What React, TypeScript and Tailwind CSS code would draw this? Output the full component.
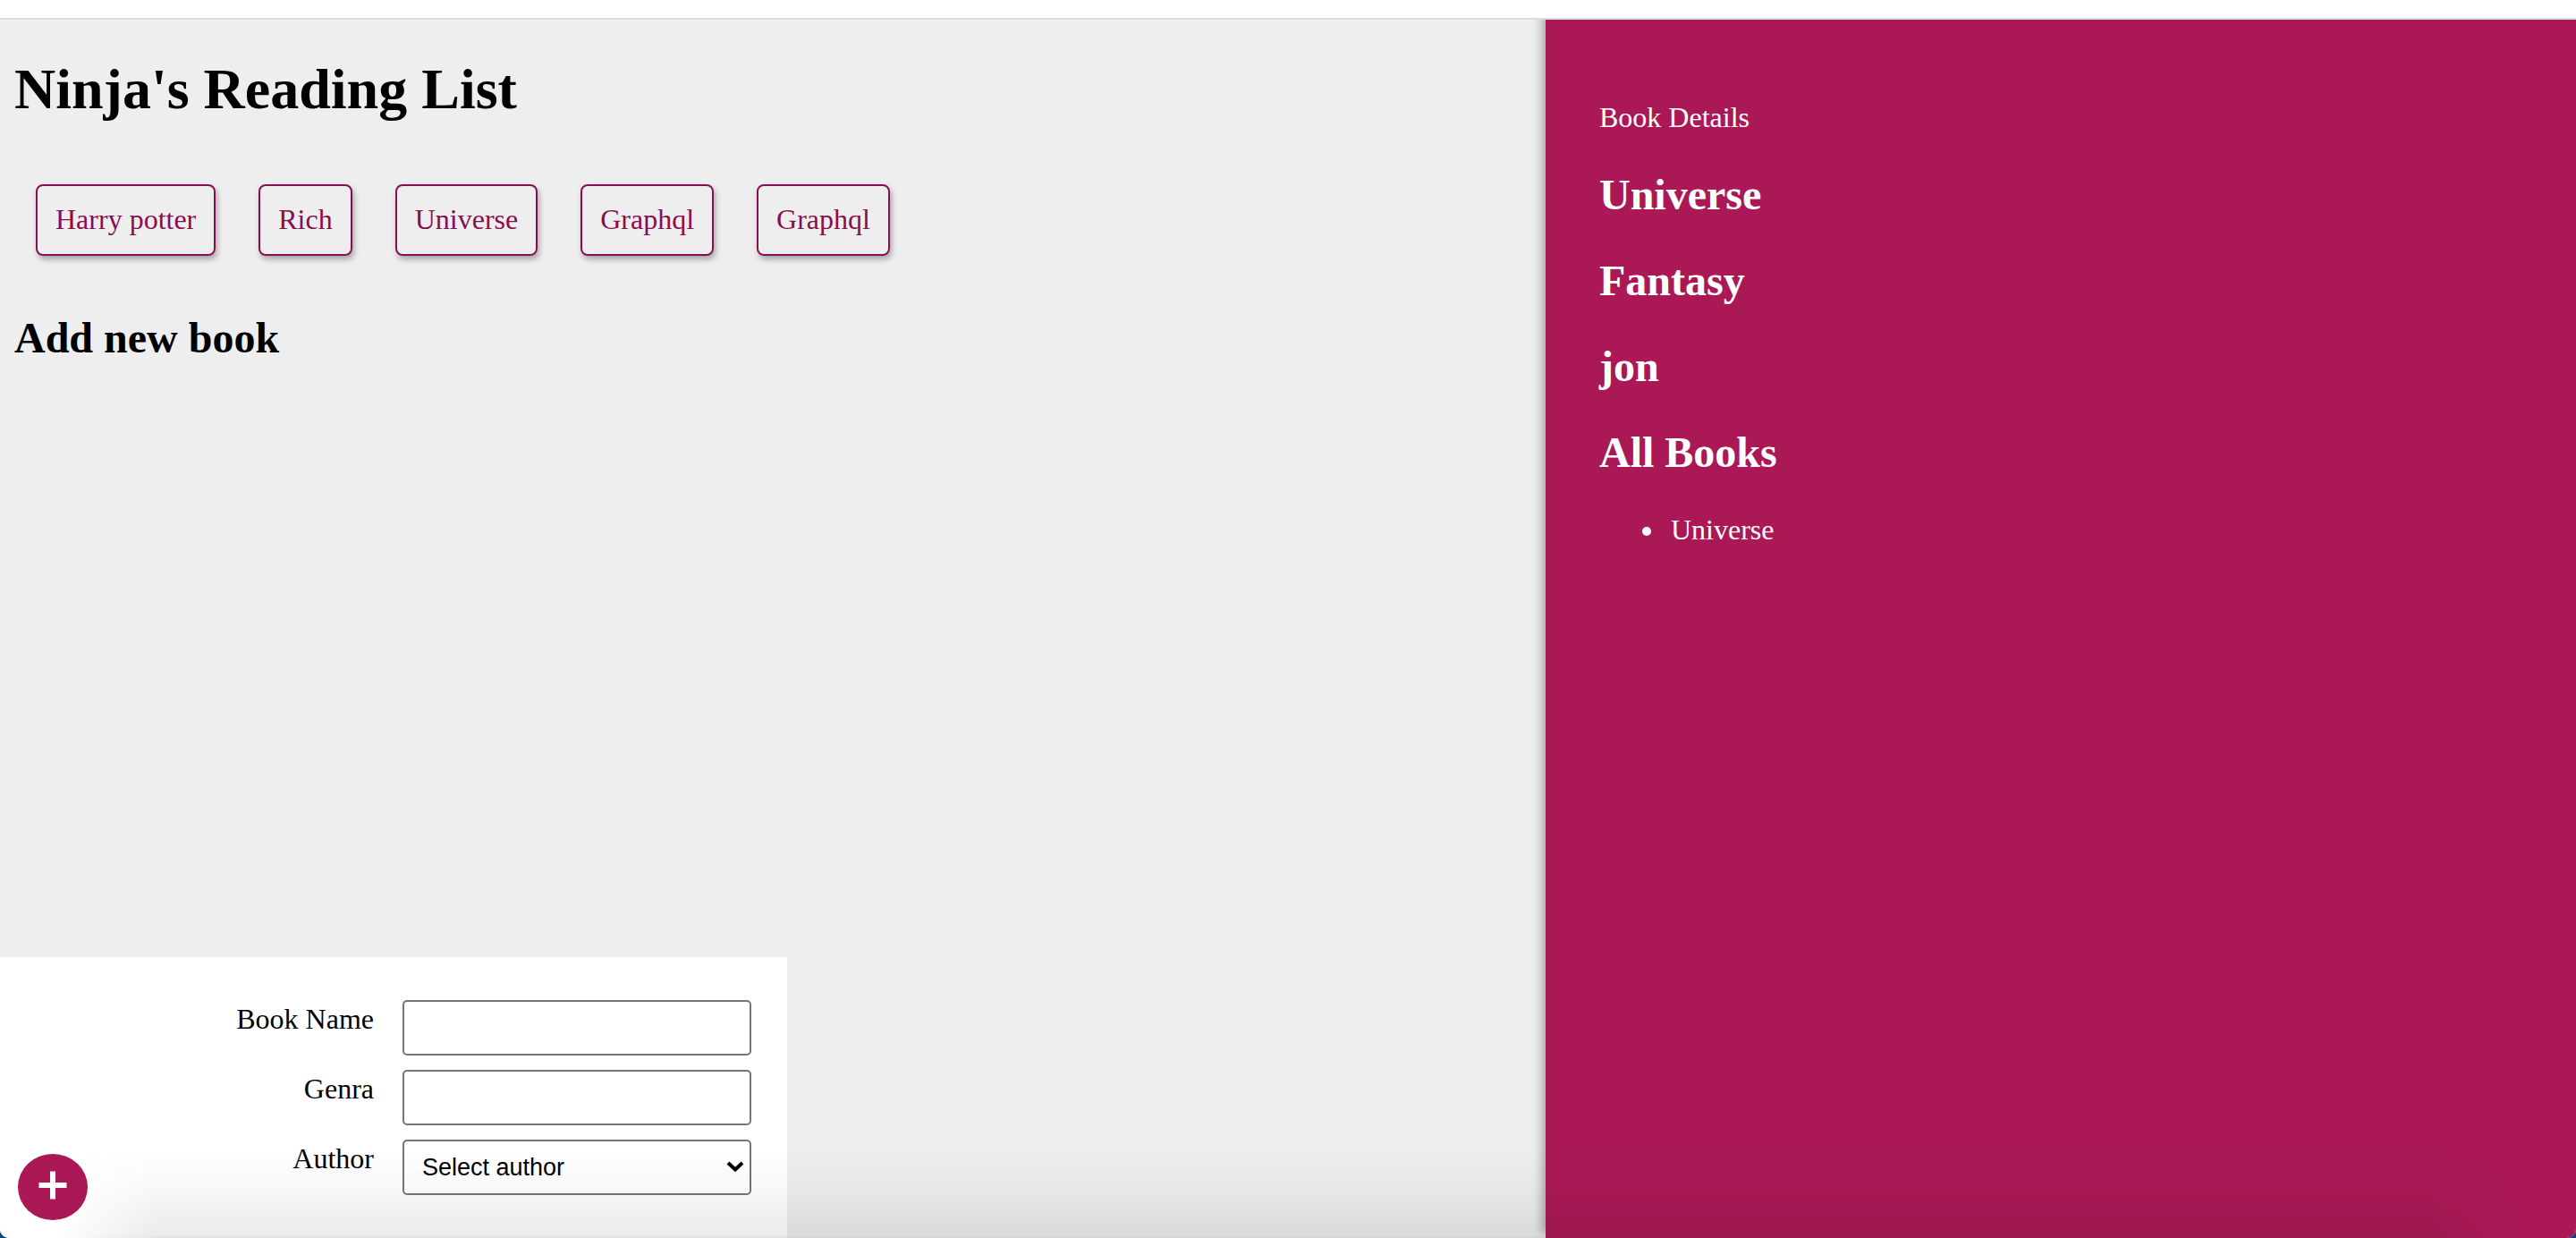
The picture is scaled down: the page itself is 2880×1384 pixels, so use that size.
import { useState } from "react";

const BOOKS = ["Harry potter", "Rich", "Universe", "Graphql", "Graphql"];

const FIELD =
  "h-[62px] w-[390px] rounded-[5px] border-2 border-[#767676] bg-white px-5 text-[27px] text-black font-['Liberation_Sans',Arial,sans-serif]";

function BookList() {
  return (
    <ul className="mt-[69px] ml-6 flex flex-wrap gap-12">
      {BOOKS.map((book, index) => (
        <li key={index}>
          <button
            type="button"
            className="block cursor-pointer rounded-lg border-2 border-[#880e4f] px-5 pt-[19px] pb-[21px] leading-9 text-[#880e4f] shadow-[2px_4px_6px_rgba(0,0,0,0.3)]"
          >
            {book}
          </button>
        </li>
      ))}
    </ul>
  );
}

function AddBookForm() {
  const [name, setName] = useState("");
  const [genre, setGenre] = useState("");
  const row = "flex items-start justify-end gap-8";
  const label = "pt-[3px] leading-9";
  return (
    <form
      className="absolute bottom-0 left-0 flex w-[880px] flex-col gap-4 bg-white px-10 py-12"
      onSubmit={(event) => event.preventDefault()}
    >
      <div className={row}>
        <label htmlFor="book-name" className={label}>
          Book Name
        </label>
        <input
          id="book-name"
          type="text"
          className={FIELD}
          value={name}
          onChange={(event) => setName(event.target.value)}
        />
      </div>
      <div className={row}>
        <label htmlFor="genre" className={label}>
          Genra
        </label>
        <input
          id="genre"
          type="text"
          className={FIELD}
          value={genre}
          onChange={(event) => setGenre(event.target.value)}
        />
      </div>
      <div className={row}>
        <label htmlFor="author" className={label}>
          Author
        </label>
        <div className="relative">
          <select id="author" className={`appearance-none ${FIELD}`} defaultValue="">
            <option value="">Select author</option>
            <option value="jon">jon</option>
          </select>
          <svg
            className="pointer-events-none absolute top-6 right-2 h-3 w-5"
            viewBox="0 0 20 12"
            fill="none"
            stroke="black"
            strokeWidth="4"
            aria-hidden="true"
          >
            <path d="M2 2 L10 9.5 L18 2" />
          </svg>
        </div>
      </div>
      <button
        type="submit"
        aria-label="Add book"
        className="absolute bottom-5 left-5 flex h-[74px] w-[78px] cursor-pointer items-center justify-center rounded-[50%] bg-[#aa1956] text-white"
      >
        <svg className="mb-1 size-8" viewBox="0 0 32 32" stroke="white" strokeWidth="6" aria-hidden="true">
          <path d="M16 0.5 V31.5 M0.5 16 H31.5" />
        </svg>
      </button>
    </form>
  );
}

function BookDetails() {
  return (
    <aside className="w-2/5 bg-[#aa1956] p-15 text-white shadow-[-4px_-6px_10px_rgba(0,0,0,0.3)]">
      <p className="mt-[31px] leading-9">Book Details</p>
      <div className="mt-[41px] flex flex-col gap-10 text-5xl leading-[56px] font-bold">
        <h2>Universe</h2>
        <h2>Fantasy</h2>
        <h2>jon</h2>
        <h2>All Books</h2>
      </div>
      <ul className="mt-10 pl-12 leading-9">
        <li className="flex items-center gap-[22px] before:mt-1 before:size-[10px] before:rounded-full before:bg-white">
          Universe
        </li>
      </ul>
    </aside>
  );
}

export default function App() {
  return (
    <div className="bg-[#0f4679]">
      <div className="flex h-screen flex-col overflow-hidden rounded-b-[10px] bg-[#eeeeee] font-['Liberation_Serif','Times_New_Roman',serif] text-[32px] text-black">
        <header className="h-[22px] shrink-0 border-b-2 border-[#dadce0] bg-white" />
        <div className="relative flex flex-1 overflow-hidden">
          <main className="flex-1 px-4">
            <h1 className="mt-[41px] text-[64px] leading-[74px] font-bold">Ninja's Reading List</h1>
            <BookList />
            <h2 className="mt-16 text-5xl leading-[56px] font-bold">Add new book</h2>
            <AddBookForm />
          </main>
          <BookDetails />
          <div className="pointer-events-none absolute inset-x-16 bottom-0 h-25 border-b-2 border-black/10 bg-linear-to-t from-black/8 via-black/3 to-transparent mask-x-from-96% mask-x-to-100%" />
        </div>
      </div>
    </div>
  );
}
